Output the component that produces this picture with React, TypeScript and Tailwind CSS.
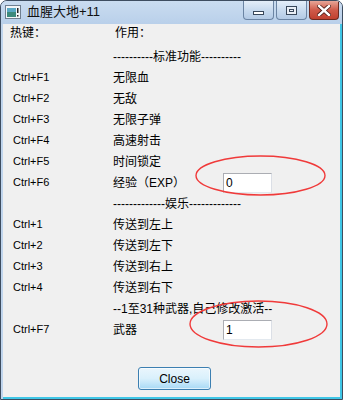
const cjk = "font-['Liberation_Sans','Noto_Sans_CJK_SC',sans-serif]"

interface Row {
  key?: string
  label: string
  value?: string
}

const rows: Row[] = [
  { label: '----------标准功能----------' },
  { key: 'Ctrl+F1', label: '无限血' },
  { key: 'Ctrl+F2', label: '无敌' },
  { key: 'Ctrl+F3', label: '无限子弹' },
  { key: 'Ctrl+F4', label: '高速射击' },
  { key: 'Ctrl+F5', label: '时间锁定' },
  { key: 'Ctrl+F6', label: '经验（EXP）', value: '0' },
  { label: '-------------娱乐-------------' },
  { key: 'Ctrl+1', label: '传送到左上' },
  { key: 'Ctrl+2', label: '传送到左下' },
  { key: 'Ctrl+3', label: '传送到右上' },
  { key: 'Ctrl+4', label: '传送到右下' },
  { label: '--1至31种武器,自己修改激活--' },
  { key: 'Ctrl+F7', label: '武器', value: '1' },
]

function AppIcon() {
  return (
    <svg width="16" height="14" viewBox="0 0 16 14">
      <rect x="0.5" y="0.5" width="15" height="13" fill="#f4f6f8" stroke="#6f7f90" />
      <rect x="2" y="3" width="9" height="9" fill="#3d8a7c" />
      <rect x="2" y="3" width="9" height="4" fill="#5aa9c4" />
      <rect x="12" y="3" width="1.5" height="5" fill="#222" />
      <rect x="12" y="10" width="1.5" height="1.5" fill="#222" />
    </svg>
  )
}

function CaptionButtons() {
  return (
    <div className="flex items-start gap-[2px] self-start">
      <div className="flex h-[19px] w-[31px] items-center justify-center rounded-b-[4px] border border-t-0 border-[#6b84a3] bg-gradient-to-b from-[#e4eef9] via-[#c9dbef] to-[#b3cae5]">
        <div className="mt-[5px] h-[4px] w-[11px] border border-[#38475a] bg-white" />
      </div>
      <div className="flex h-[19px] w-[31px] items-center justify-center rounded-b-[4px] border border-t-0 border-[#6b84a3] bg-gradient-to-b from-[#e4eef9] via-[#c9dbef] to-[#b3cae5]">
        <div className="flex h-[9px] w-[11px] items-center justify-center border border-[#38475a] bg-[#e9eef5]">
          <div className="h-[3px] w-[5px] border border-[#38475a]" />
        </div>
      </div>
      <div className="flex h-[19px] w-[30px] items-center justify-center rounded-b-[4px] border border-t-0 border-[#6d2a20] bg-gradient-to-b from-[#e7a698] via-[#cf5a4a] to-[#c0402f]">
        <svg width="14" height="11" viewBox="0 0 14 11">
          <path d="M2 1 L12 10 M12 1 L2 10" stroke="#4a1a14" strokeWidth="4" strokeLinecap="square" />
          <path d="M2 1 L12 10 M12 1 L2 10" stroke="#ffffff" strokeWidth="2.4" strokeLinecap="square" />
        </svg>
      </div>
    </div>
  )
}

function TextBox({ value }: { value: string }) {
  return (
    <div className="flex h-[20px] w-[49px] shrink-0 items-center border border-[#abadb3] border-b-[#e3e9ef] border-r-[#dbdfe6] bg-white pl-[2px] text-[12px] text-black">
      {value}
    </div>
  )
}

export default function App() {
  return (
    <div className={`relative flex h-[400px] w-[343px] flex-col overflow-hidden rounded-t-[7px] border border-[#3e4d60] bg-[#c0d5ed] ${cjk}`}>
      <div className="flex h-[23px] items-start bg-gradient-to-b from-[#cadcf0] to-[#b9d0ea] pr-[3px]">
        <div className="mt-[4px] ml-[4px]">
          <AppIcon />
        </div>
        <span className="ml-[6px] mt-[3px] text-[13px] leading-[16px] text-[#111]">血腥大地+11</span>
        <div className="flex-1" />
        <CaptionButtons />
      </div>

      <div className="flex flex-1 pl-[2px]">
        <div className="relative flex-1 border-r-2 border-b-2 border-r-[#3fc6e6] border-b-[#3fc6e6] bg-[#f0f0f0] text-black">
          <div className="flex h-[18px] items-center text-[12px]">
            <span className="ml-[7px] w-[105px]">热键：</span>
            <span>作用：</span>
          </div>

          <div className="mt-[4px] flex flex-col">
            {rows.map((row, i) => (
              <div key={i} className="flex h-[21px] items-center">
                <span className="ml-[10px] w-[100px] shrink-0 text-[11px]">{row.key}</span>
                <span className="w-[110px] shrink-0 whitespace-nowrap text-[12px]">{row.label}</span>
                {row.value ? <TextBox value={row.value} /> : null}
              </div>
            ))}
          </div>

          <div className="mt-[27px] ml-[135px] flex h-[23px] w-[73px] items-center justify-center rounded-[3px] border border-[#3c7fb1] bg-gradient-to-b from-[#eaf6fd] via-[#d9f0fc] to-[#a7d9f5] text-[12px] text-black shadow-[inset_0_0_0_1px_rgba(255,255,255,0.6)]">
            Close
          </div>

          <svg className="pointer-events-none absolute left-0 top-0" width="338" height="374">
            <ellipse cx="257.5" cy="151.5" rx="64.5" ry="19.5" fill="none" stroke="#f03a3a" strokeWidth="1.4" />
            <ellipse cx="255.5" cy="300" rx="68.5" ry="23" fill="none" stroke="#f03a3a" strokeWidth="1.4" />
          </svg>
        </div>
      </div>
    </div>
  )
}
